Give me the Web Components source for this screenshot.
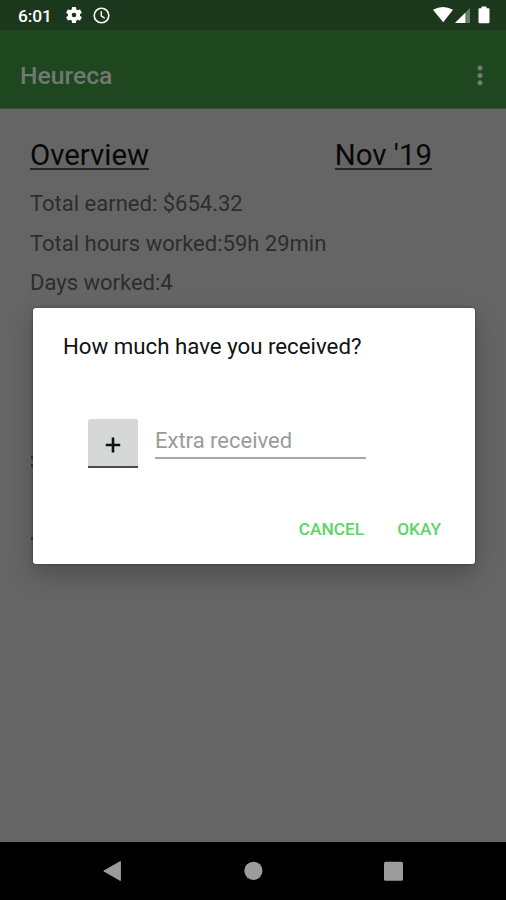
<!DOCTYPE html>
<html lang="en">
<head>
<meta charset="utf-8">
<title>Heureca</title>
<style>
html,body{margin:0;height:100%}
body{font-family:Roboto,"Liberation Sans",sans-serif;background:#656565;overflow:hidden}
</style>
</head>
<body>
<heureca-app></heureca-app>
<script>
const define = (name, html) => customElements.define(name, class extends HTMLElement {
  constructor() {
    super();
    this.attachShadow({mode: 'open'}).innerHTML = html;
  }
});

define('status-bar', `
<style>
:host{display:flex;box-sizing:border-box;height:30px;background:#1b381c;color:#fff;padding:0 14px 0 18px;align-items:center}
.time{font-size:17.4px;font-weight:500;line-height:30px;width:48px;padding-top:1px;box-sizing:border-box;letter-spacing:-.1px}
svg{display:block;flex:none}
.gap{flex:1}
</style>
<span class="time">6:01</span>
<svg width="16" height="16" viewBox="2 2 20 20" fill="#fff"><path d="M19.43 12.98c.04-.32.07-.64.07-.98s-.03-.66-.07-.98l2.11-1.65a.5.5 0 0 0 .12-.64l-2-3.46a.5.5 0 0 0-.61-.22l-2.49 1a7.3 7.3 0 0 0-1.69-.98l-.38-2.65A.49.49 0 0 0 14 2h-4a.49.49 0 0 0-.49.42l-.38 2.65c-.61.25-1.17.59-1.69.98l-2.49-1a.49.49 0 0 0-.61.22l-2 3.46a.49.49 0 0 0 .12.64l2.11 1.65c-.04.32-.07.65-.07.98s.03.66.07.98l-2.11 1.65a.5.5 0 0 0-.12.64l2 3.46c.12.22.39.3.61.22l2.49-1c.52.4 1.08.73 1.69.98l.38 2.65c.03.24.24.42.49.42h4c.25 0 .46-.18.49-.42l.38-2.65a7.3 7.3 0 0 0 1.69-.98l2.49 1c.23.09.49 0 .61-.22l2-3.46a.5.5 0 0 0-.12-.64zM12 14.9a2.9 2.9 0 1 1 0-5.8 2.9 2.9 0 0 1 0 5.8z"/></svg>
<svg style="margin-left:11px" width="17" height="17" viewBox="0 0 17 17" fill="none" stroke="#fff"><circle cx="8.5" cy="8.5" r="7.3" stroke-width="1.6"/><path d="M8.3 4.2v4.7l3.4 2.4" stroke-width="1.4"/></svg>
<span class="gap"></span>
<svg width="60" height="20" viewBox="432 5 60 20"><path d="M433 9.8Q443 4 453 9.8L443.2 22.3z" fill="#fff"/><path d="M455 23 470 8v15z" fill="#fff" fill-opacity=".35"/><path d="M455 23 465.3 12.7V23z" fill="#fff"/><path d="M479.5 8.2h2V6.5h5v1.7h2q1 0 1 1V22q0 1.2-1 1.2h-9q-1 0-1-1.2V9.2q0-1 1-1z" fill="#fff"/></svg>
`);

define('app-bar', `
<style>
:host{display:flex;box-sizing:border-box;height:79px;background:#1e471f;align-items:center;padding:13px 23px 0 20px;justify-content:space-between;color:#727872;border-bottom:1px solid #3c4f3c}
.t{font-size:24.7px;font-weight:500;line-height:30px}
svg{display:block}
</style>
<span class="t"><slot></slot></span>
<svg width="6" height="22" viewBox="0 0 6 22" fill="#727872"><circle cx="3" cy="3" r="2.5"/><circle cx="3" cy="10.4" r="2.5"/><circle cx="3" cy="17.8" r="2.5"/></svg>
`);

define('overview-panel', `
<style>
:host{display:block;padding:28px 74px 0 30px;color:#2d2d2d}
.head{display:flex;justify-content:space-between;color:#080808;font-size:29.4px;line-height:36px}
.head span{height:33px;box-sizing:border-box;border-bottom:2px solid #262626}
.rows{display:grid;grid-auto-rows:39.5px;margin-top:14px;font-size:22px;line-height:39.5px;white-space:nowrap}
svg{display:block}
</style>
<div class="head"><span>Overview</span><span>Nov '19</span></div>
<div class="rows"><slot></slot></div>
<svg width="3" height="250" viewBox="0 0 3 250" fill="#3a3a3a"><path d="M1 153h2v3H1zM1 161h2v3H1zM1 234h2v3H1z"/></svg>
`);

define('amount-field', `
<style>
:host{display:flex;gap:17px}
button{width:50px;height:49px;border:0;padding:5px 0 0;box-sizing:border-box;background:#d6d8d7;border-bottom:2px solid #4a4a4a;border-radius:2px 2px 0 0;display:grid;place-items:center}
.field{width:211px;height:39.5px;box-sizing:border-box;border-bottom:2px solid #a8a8a8;color:#9b9b9b;font-size:22px;line-height:44px}
</style>
<button aria-label="Add"><svg width="16" height="16" viewBox="0 0 16 16"><path d="M8 .5v15M.8 8h14.4" stroke="#111" stroke-width="2.6"/></svg></button>
<div class="field"><slot></slot></div>
`);

define('dialog-card', `
<style>
:host{display:flex;flex-direction:column;box-sizing:border-box;width:442px;height:256px;background:#fff;border-radius:3px;padding:22px 34px 20px 30px;box-shadow:0 10px 24px rgba(0,0,0,.24),0 0 3px rgba(0,0,0,.35)}
.title{font-size:22.25px;line-height:33px;color:#111;white-space:nowrap}
amount-field{margin:56px 0 0 25px}
.actions{display:flex;justify-content:flex-end;gap:33px;margin-top:auto;color:#5cd566;font-size:17.3px;font-weight:500;line-height:30px}
</style>
<div class="title"><slot></slot></div>
<amount-field>Extra received</amount-field>
<div class="actions"><span>CANCEL</span><span>OKAY</span></div>
`);

define('nav-bar', `
<style>
:host{display:flex;box-sizing:border-box;height:58px;background:#000;padding:0 102px;justify-content:space-between;align-items:center}
svg{display:block}
</style>
<svg width="20" height="22" viewBox="0 0 20 22"><path d="M1.8 11 18.4 1.5v19z" fill="#9c9c9c" stroke="#9c9c9c" stroke-linejoin="round"/></svg>
<svg width="20" height="20" viewBox="0 0 20 20"><circle cx="10.4" cy="9.8" r="9.1" fill="#9c9c9c"/></svg>
<svg width="21" height="20" viewBox="0 0 21 20"><rect x="1" y=".8" width="19" height="19" rx="1.5" fill="#9c9c9c"/></svg>
`);

define('heureca-app', `
<style>
:host{display:grid;width:506px;height:900px;background:#656565}
.screen,.overlay{grid-area:1/1;display:flex;flex-direction:column}
.screen overview-panel{flex:1}
.overlay{padding:308px 0 0 33px}
</style>
<div class="screen">
<status-bar></status-bar>
<app-bar>Heureca</app-bar>
<overview-panel><span>Total earned: $654.32</span><span>Total hours worked:59h 29min</span><span>Days worked:4</span></overview-panel>
<nav-bar></nav-bar>
</div>
<div class="overlay"><dialog-card>How much have you received?</dialog-card></div>
`);
</script>
</body>
</html>
